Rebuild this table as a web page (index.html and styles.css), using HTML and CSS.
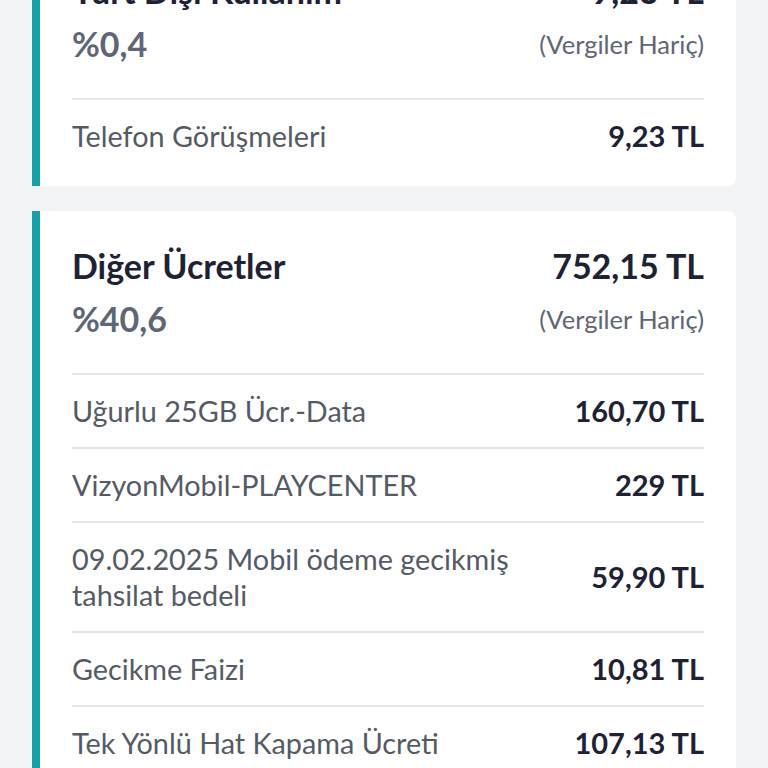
FILE: index.html
```html
<!DOCTYPE html>
<html lang="tr">
<head>
<meta charset="utf-8">
<link rel="stylesheet" href="styles.css">
</head>
<body>
<main class="page">
  <section class="card">
    <div class="head">
      <div class="head-row">
        <span class="title">Yurt Dışı Kullanım</span>
        <span class="total">9,23 TL</span>
      </div>
      <div class="head-row sub">
        <span class="percent">%0,4</span>
        <span class="note">(Vergiler Hariç)</span>
      </div>
    </div>
    <ul class="items">
      <li class="item"><span class="label">Telefon Görüşmeleri</span><span class="amount">9,23 TL</span></li>
    </ul>
  </section>
  <section class="card">
    <div class="head">
      <div class="head-row">
        <span class="title">Diğer Ücretler</span>
        <span class="total">752,15 TL</span>
      </div>
      <div class="head-row sub">
        <span class="percent">%40,6</span>
        <span class="note">(Vergiler Hariç)</span>
      </div>
    </div>
    <ul class="items">
      <li class="item"><span class="label">Uğurlu 25GB Ücr.-Data</span><span class="amount">160,70 TL</span></li>
      <li class="item"><span class="label">VizyonMobil-PLAYCENTER</span><span class="amount">229 TL</span></li>
      <li class="item"><span class="label">09.02.2025 Mobil ödeme gecikmiş tahsilat bedeli</span><span class="amount">59,90 TL</span></li>
      <li class="item"><span class="label">Gecikme Faizi</span><span class="amount">10,81 TL</span></li>
      <li class="item"><span class="label">Tek Yönlü Hat Kapama Ücreti</span><span class="amount">107,13 TL</span></li>
      <li class="item"><span class="label">Diğer</span><span class="amount">184,61 TL</span></li>
    </ul>
  </section>
</main>
</body>
</html>
```
FILE: styles.css
```css
html, body {
  margin: 0;
  padding: 0;
  background: #f2f3f5;
  overflow: hidden;
}
body {
  font-family: "Lato", "Open Sans", sans-serif;
  color: #1e2235;
}
.page {
  display: flex;
  flex-direction: column;
  gap: 25px;
  padding: 0 32px;
  margin-top: -64px;
}
.card {
  background: #ffffff;
  border-left: 8px solid #16a1a9;
  border-radius: 0 8px 8px 0;
  padding: 33px 32px 14px 32px;
}
.head {
  display: flex;
  flex-direction: column;
  padding-bottom: 23px;
}
.head-row {
  display: flex;
  justify-content: space-between;
  align-items: center;
  height: 44px;
}
.head-row.sub {
  height: 62px;
}
.title, .total {
  font-size: 34px;
  font-weight: 700;
  line-height: 44px;
  color: #1e2235;
}
.percent {
  font-size: 34px;
  font-weight: 700;
  line-height: 44px;
  color: #5f6675;
}
.note {
  font-size: 25.5px;
  color: #5f6675;
  line-height: 36px;
}
.items {
  list-style: none;
  margin: 0;
  padding: 0;
}
.item {
  display: flex;
  justify-content: space-between;
  align-items: center;
  gap: 24px;
  border-top: 2px solid #e4e5e7;
  padding: 18px 0;
}
.label {
  font-size: 28.8px;
  line-height: 36px;
  color: #555b66;
  max-width: 460px;
}
.amount {
  font-size: 29px;
  line-height: 36px;
  font-weight: 700;
  color: #1e2235;
  white-space: nowrap;
}
```
